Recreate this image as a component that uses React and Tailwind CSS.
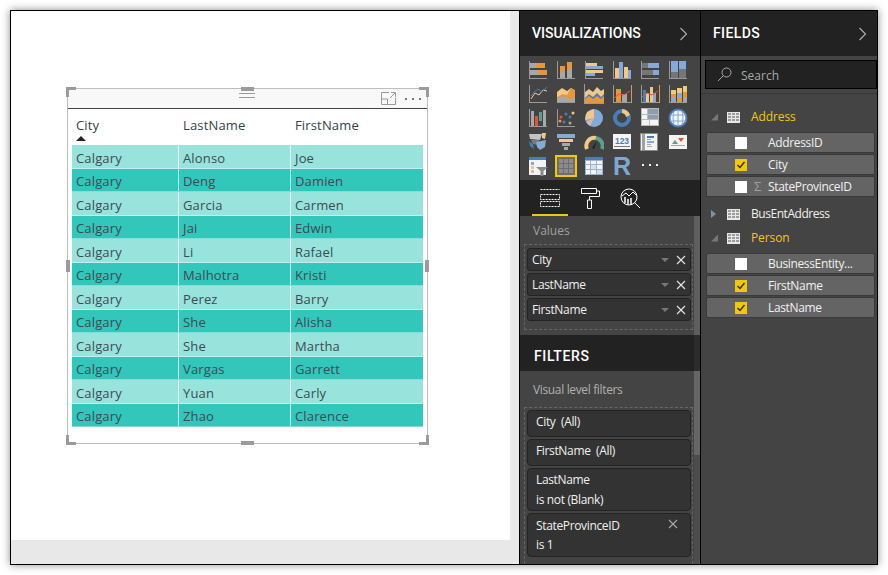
import React from "react";

const o = "#e8963c", l = "#efc88a", g = "#a8a8a8", b = "#85aad5", d = "#4a7db5", a = "#9a9a9a", G = "#767676", w = "#f4f4f4", r = "#d9573a", t = "#5f9e8f";

const bars = (...rows) => rows.map(([x, y, wd, h, c], i) => <rect key={i} x={x} y={y} width={wd} height={h} fill={c} />);
const axes = bars([1, 1, 1, 18, a], [1, 18, 18, 1, a]);

const chartIcons = [
    <>{axes}{bars([2, 3, 6, 5, g], [8, 3, 9, 5, o], [2, 10, 9, 5, g], [11, 10, 8, 5, o])}</>,
    <>{axes}{bars([4, 12, 5, 6, g], [4, 6, 5, 6, o], [11, 9, 5, 9, g], [11, 2, 5, 7, o])}</>,
    <>{axes}{bars([2, 3, 11, 3, l], [2, 6, 17, 3, b], [2, 10, 17, 3, l], [2, 13, 9, 3, b])}</>,
    <>{axes}{bars([3, 8, 4, 10, l], [7, 2, 4, 16, b], [12, 7, 4, 11, l], [16, 10, 3, 8, b])}</>,
    <>{axes}{bars([2, 3, 6, 5, G], [8, 3, 11, 5, b], [2, 10, 11, 5, G], [13, 10, 6, 5, b])}</>,
    <>{axes}{bars([3, 1, 7, 11, b], [3, 12, 7, 6, G], [11, 1, 7, 8, b], [11, 9, 7, 9, G])}</>,

    <>{axes}<polyline points="3,15 7,9 11,11 15,6 19,7" fill="none" stroke={l} strokeWidth="1" /><polyline points="3,12 6,8 10,5 14,8 19,3" fill="none" stroke={d} strokeWidth="1" /></>,
    <>{bars([1, 18, 18, 1, a])}<polygon points="1,18 1,8 6,4 11,7 15,4 19,7 19,18" fill={l} /><polygon points="1,18 1,13 7,10 11,11 15,4 19,6 19,18" fill={o} /><polygon points="1,18 1,14 8,12 13,15 19,14 19,18" fill={g} /></>,
    <>{bars([0, 0, 1, 20, a], [0, 19, 20, 1, a])}<polygon points="1,19 1,8 5,5 9,8 13,3 17,7 20,5 20,19" fill={l} /><polygon points="1,14 5,10 9,13 13,9 17,13 20,10 20,17 1,17" fill={d} /><polygon points="1,19 1,15 5,12 9,15 13,12 17,15 20,12 20,19" fill={o} /></>,
    <>{axes}{bars([4, 5, 5, 13, o], [10, 10, 5, 8, g], [19, 1, 1, 18, o])}<polyline points="2,14 7,10 12,11 18,7" fill="none" stroke={r} strokeWidth="1" /></>,
    <>{axes}{bars([3, 6, 3, 12, d], [6, 9, 3, 9, l], [10, 3, 3, 15, l], [13, 9, 3, 9, b], [19, 1, 1, 18, o])}<polyline points="2,13 7,9 12,11 18,7" fill="none" stroke={r} strokeWidth="1" /></>,
    <>{axes}{bars([3, 6, 5, 4, l], [3, 10, 5, 4, o], [3, 14, 5, 4, b], [9, 4, 5, 5, l], [9, 9, 5, 5, b], [9, 14, 5, 4, o], [15, 2, 4, 6, l], [15, 8, 4, 5, o], [15, 13, 4, 5, g])}</>,

    <>{axes}{bars([3, 3, 3, 15, g], [7, 8, 3, 10, r], [11, 4, 3, 9, t], [15, 2, 3, 16, g])}</>,
    <>{axes}<circle cx="4" cy="13" r="1.5" fill={o} /><circle cx="5" cy="9" r="1.5" fill={r} /><circle cx="8" cy="14" r="1.5" fill={d} /><circle cx="10" cy="6" r="1.5" fill={d} /><circle cx="14" cy="9" r="1.5" fill={d} /><circle cx="14" cy="15" r="1.5" fill={g} /><circle cx="17" cy="5" r="1.5" fill={l} /></>,
    <><circle cx="10" cy="10" r="9" fill={b} /><polygon points="10,10 1,12 3,4 10,1" fill={l} /><polygon points="10,10 2,14 6,18" fill="#e4b5a0" /></>,
    <><circle cx="10" cy="10" r="7" fill="none" stroke={d} strokeWidth="4" /><path d="M10 1 A9 9 0 0 1 18 7 L14 9 A5 5 0 0 0 10 5 Z" fill={l} /></>,
    <>{bars([1, 0, 18, 18, "#b9b9b9"], [2, 1, 5, 5, w], [8, 1, 10, 5, "#8e9eb0"], [2, 7, 5, 4, w], [8, 7, 10, 4, "#8e9eb0"], [2, 12, 7, 5, w], [10, 12, 8, 5, w])}</>,
    <><circle cx="10" cy="10" r="8.5" fill={w} stroke={d} strokeWidth="2" /><path d="M2 7H18M2 13H18M10 2V18M6 3Q4 10 6 17M14 3Q16 10 14 17" stroke={b} strokeWidth="1" fill="none" /></>,

    <><polygon points="1,2 14,2 12,8 2,7" fill="#c3c3c3" /><polygon points="3,8 11,8 10,13 5,12" fill="#7a7a7a" /><polygon points="8,10 18,8 17,15 12,18 9,15" fill={b} /><polygon points="14,1 18,1 17,7 14,6" fill={l} /><polygon points="1,9 5,12 6,17 2,14" fill={d} /></>,
    <>{bars([1, 2, 18, 4, b], [3, 7, 14, 3, l], [6, 11, 8, 3, g], [8, 15, 4, 3, g])}</>,
    <><path d="M3 17 A8 8 0 0 1 12 6" fill="none" stroke={l} strokeWidth="4" /><path d="M12 6 A8 8 0 0 1 18 17" fill="none" stroke={t} strokeWidth="4" /><polygon points="8,16 13,9 10,17" fill="#222" /></>,
    <>{bars([1, 2, 18, 15, w], [2, 14, 16, 1, G])}<text x="10" y="12" fontSize="8.5" fontWeight="700" textAnchor="middle" fill={d} fontFamily="'Liberation Sans', sans-serif">123</text></>,
    <>{bars([0, 1, 18, 18, "#8a8a8a"], [1, 2, 16, 16, w], [2, 2, 3, 16, "#a2a2a2"], [7, 4, 7, 2, d], [7, 7, 4, 1, g], [7, 9, 7, 2, b], [7, 12, 4, 1, g], [7, 14, 5, 1, g])}</>,
    <>{bars([1, 3, 18, 14, w], [3, 13, 14, 1, g])}<polygon points="4,12 7,8 10,12" fill={t} /><polygon points="10,6 16,6 13,10" fill={r} /></>,

    <>{bars([1, 1, 17, 18, w], [1, 1, 17, 3, d], [3, 6, 3, 3, b], [3, 10, 3, 3, l], [3, 14, 3, 3, "#e4b5a0"])}<polygon points="8,11 20,11 15.5,15 15.5,20 12.5,20 12.5,15" fill="#8a8a8a" /></>,
    null,
    <>{bars([1, 1, 18, 18, "#9fb3cc"], [1, 1, 18, 3, d], [2, 5, 4, 3, w], [7, 5, 5, 3, w], [13, 5, 5, 3, w], [2, 9, 4, 4, w], [7, 9, 5, 4, "#d5e0ee"], [13, 9, 5, 4, w], [2, 14, 4, 4, w], [7, 14, 5, 4, w], [13, 14, 5, 4, "#d5e0ee"])}</>,
    "R",
    <>{bars([2, 8, 2, 2, w], [9, 8, 2, 2, w], [16, 8, 2, 2, w])}</>,
];

const Icon = ({ children, size = 20 }) => (
    <svg width={size} height={size} viewBox="0 0 20 20" className="block">{children}</svg>
);

const SelectedTable = () => (
    <div className="w-[22px] h-[22px] border-2 border-[#f2c80f] bg-[#6e6e6e] grid grid-cols-3 gap-px p-[2px]">
        {Array.from({ length: 9 }).map((_, i) => <div key={i} className="bg-[#8c8c8c]" />)}
    </div>
);

const VizGrid = () => (
    <div className="grid grid-cols-[repeat(6,28px)] auto-rows-[24px] pl-[4px] pt-[2px] h-[124px] bg-[#444444]">
        {chartIcons.map((ic, i) => (
            <div key={i} className="flex items-center justify-center">
                {ic === null ? <SelectedTable /> : ic === "R" ? (
                    <span className="text-[25px] leading-none font-bold text-[#7fa8d0] font-['Liberation_Sans',sans-serif]">R</span>
                ) : <Icon>{ic}</Icon>}
            </div>
        ))}
    </div>
);

const Chevron = () => (
    <svg width="9" height="14" viewBox="0 0 9 14"><polyline points="1.5,1 7.5,7 1.5,13" fill="none" stroke="#b0b0b0" strokeWidth="1.1" /></svg>
);

const Cross = ({ color = "#e6e6e6" }) => (
    <svg width="10" height="10" viewBox="0 0 10 10"><path d="M1 1L9 9M9 1L1 9" stroke={color} strokeWidth="1.1" /></svg>
);

const PanelHead = ({ title, chevron, className = "" }) => (
    <div className={`flex items-center justify-between bg-[#222222] text-white font-medium text-[14px] font-['Roboto',sans-serif] ${className}`}>
        <span>{title}</span>
        {chevron && <Chevron />}
    </div>
);

const ValuePill = ({ label }) => (
    <div className="h-[23px] flex items-center bg-[#333333] border border-[#222222] rounded-[3px] pl-[4px] pr-[4px] text-[#f0f0f0] tracking-[-0.35px]">
        <span className="flex-1">{label}</span>
        <span className="w-0 h-0 mr-[7px] border-x-[4px] border-x-transparent border-t-[4px] border-t-[#777777]" />
        <Cross />
    </div>
);

const FilterPill = ({ lines, close, className }) => (
    <div className={`relative flex flex-col justify-center bg-[#333333] border border-[#222222] rounded-[4px] pl-[8px] text-[#f0f0f0] leading-[19.5px] tracking-[-0.35px] whitespace-pre ${className}`}>
        {lines.map((x) => <div key={x}>{x}</div>)}
        {close && <div className="absolute right-[12px] top-[5px]"><Cross color="#a8a8a8" /></div>}
    </div>
);

const TableGlyph = () => (
    <div className="w-[13px] h-[11px] bg-[#e8e8e8] grid grid-cols-3 grid-rows-3 gap-px p-px">
        {Array.from({ length: 9 }).map((_, i) => <div key={i} className="bg-[#9c9c9c]" />)}
    </div>
);

const Group = ({ name, open, active }) => (
    <div className="h-[24px] flex items-center pl-[10px]">
        {open ? (
            <span className="w-[7px] h-[7px] bg-[#777777] [clip-path:polygon(100%_0,100%_100%,0_100%)]" />
        ) : (
            <span className="w-0 h-0 border-y-[4px] border-y-transparent border-l-[5px] border-l-[#7c93ad] mr-[2px]" />
        )}
        <span className="ml-[9px]"><TableGlyph /></span>
        <span className={`ml-[11px] ${active ? "text-[#f2c80f] tracking-[-0.1px]" : "text-[#f0f0f0] tracking-[-0.45px]"}`}>{name}</span>
    </div>
);

const Field = ({ name, checked, sigma }) => (
    <div className="h-[21px] flex items-center bg-[#646464] border border-[#3a3a3a] rounded-[2px] text-[#f0f0f0] tracking-[-0.35px]">
        <span className={`ml-[28px] w-[12px] h-[12px] flex items-center justify-center ${checked ? "bg-[#f2c80f]" : "bg-white"}`}>
            {checked && <svg width="10" height="10" viewBox="0 0 10 10"><polyline points="1.5,5 4,7.5 8.5,2" fill="none" stroke="#333" strokeWidth="1.5" /></svg>}
        </span>
        <span className="w-[21px] text-center text-[#a0a0a0] text-[13px] leading-none">{sigma ? "Σ" : ""}</span>
        <span>{name}</span>
    </div>
);

const rows = [
    ["Calgary", "Alonso", "Joe"],
    ["Calgary", "Deng", "Damien"],
    ["Calgary", "Garcia", "Carmen"],
    ["Calgary", "Jai", "Edwin"],
    ["Calgary", "Li", "Rafael"],
    ["Calgary", "Malhotra", "Kristi"],
    ["Calgary", "Perez", "Barry"],
    ["Calgary", "She", "Alisha"],
    ["Calgary", "She", "Martha"],
    ["Calgary", "Vargas", "Garrett"],
    ["Calgary", "Yuan", "Carly"],
    ["Calgary", "Zhao", "Clarence"],
];

const Handle = ({ className }) => <div className={`absolute bg-[#9b9b9b] ${className}`} />;

const TableVisual = () => (
    <div className="relative w-[361px] h-[356px] border border-[#bdbdbd] bg-white font-['Open_Sans',sans-serif] text-[13px] tracking-[0.15px] text-[#3d4a55]">
        <div className="h-[20px] bg-[#f8f8f8] border-b border-[#444444] flex items-center justify-end pr-[6px] gap-[9px]">
            <svg width="15" height="13" viewBox="0 0 15 13"><path d="M8 .5H.5V12.5H14.5V6M.5 7H6.5V12.5M9 6L14 1M10 .5H14.5V5" fill="none" stroke="#9a9a9a" /></svg>
            <svg width="16" height="2" viewBox="0 0 16 2"><path d="M0 0h2v2H0zM7 0h2v2H7zM14 0h2v2h-2z" fill="#777777" /></svg>
        </div>
        <div className="h-[36px] flex pl-[4px] pt-[7px] text-[#333f48]">
            <div className="w-[107px] pl-[4px] relative">City<span className="absolute left-[4px] top-[20px] w-0 h-0 border-x-[5px] border-x-transparent border-b-[5px] border-b-[#222222]" /></div>
            <div className="w-[112px] pl-[4px]">LastName</div>
            <div className="pl-[4px]">FirstName</div>
        </div>
        <div className="ml-[4px] w-[351px]">
            {rows.map((row, i) => (
                <div key={i} className={`h-[23.5px] flex items-center border-b border-[#ffffff]/40 ${i % 2 ? "bg-[#33c6bb]" : "bg-[#98e4dc]"}`}>
                    <div className="w-[107px] h-full pl-[4px] pt-[4px] flex items-center border-r border-white/70">{row[0]}</div>
                    <div className="w-[112px] h-full pl-[4px] pt-[4px] flex items-center border-r border-white/70">{row[1]}</div>
                    <div className="pl-[4px] h-full pt-[4px] flex items-center">{row[2]}</div>
                </div>
            ))}
        </div>
        <div className="absolute left-[171px] top-[4px] w-[16px] flex flex-col gap-[3px]">
            <div className="h-px bg-[#9a9a9a]" />
            <div className="h-px bg-[#9a9a9a]" />
        </div>
        {/* resize handles */}
        <Handle className="-left-[2px] -top-[2px] w-[10px] h-[3px]" />
        <Handle className="-left-[2px] -top-[2px] w-[3px] h-[10px]" />
        <Handle className="-right-[2px] -top-[2px] w-[10px] h-[3px]" />
        <Handle className="-right-[2px] -top-[2px] w-[3px] h-[10px]" />
        <Handle className="-left-[2px] -bottom-[2px] w-[10px] h-[3px]" />
        <Handle className="-left-[2px] -bottom-[2px] w-[3px] h-[10px]" />
        <Handle className="-right-[2px] -bottom-[2px] w-[10px] h-[3px]" />
        <Handle className="-right-[2px] -bottom-[2px] w-[3px] h-[10px]" />
        <Handle className="left-[173px] -top-[2px] w-[13px] h-[4px]" />
        <Handle className="left-[173px] -bottom-[2px] w-[13px] h-[4px]" />
        <Handle className="-left-[2px] top-[171px] w-[4px] h-[12px]" />
        <Handle className="-right-[2px] top-[171px] w-[4px] h-[12px]" />
    </div>
);

const Tabs = () => (
    <div className="h-[36px] bg-[#222222] flex relative">
        <div className="ml-[12px] w-[36px] h-full border-b-2 border-[#f2c80f] flex justify-center pt-[8px]">
            <svg width="20" height="20" viewBox="0 0 20 20" fill="none" stroke="#ffffff" strokeDasharray="2 1">
                <path d="M.5 1.5H19.5M.5 6.5H19.5V11.5H.5ZM.5 13.5H19.5V18.5H.5Z" />
            </svg>
        </div>
        <div className="ml-[13px] pt-[8px]">
            <svg width="19" height="21" viewBox="0 0 19 21" fill="none" stroke="#ffffff">
                <path d="M.5.5H15.5V5.5H.5ZM15.5 3H18.5V8.5H8.5V12M6.5 12H10.5V20.5H6.5Z" />
            </svg>
        </div>
        <div className="ml-[20px] pt-[8px]">
            <svg width="21" height="21" viewBox="0 0 21 21" fill="none" stroke="#ffffff">
                <circle cx="9" cy="9" r="8" />
                <path d="M14.5 14.5L20 20M2 8L6 5L9 8L13 4L16 7" />
                <path d="M5 9V15M8 11V16.5M11 10V16.5" strokeWidth="1.5" />
            </svg>
        </div>
    </div>
);

export default function App() {
    return (
        <div className="w-[888px] h-[575px] bg-white pt-[10px] pl-[10px] overflow-hidden font-['Open_Sans',sans-serif] text-[12px]">
            <div className="w-[868px] h-[555px] border border-black flex shadow-[0_0_8px_rgba(0,0,0,0.45)] bg-white">
                <div className="w-[509px] border-r border-black flex flex-col">
                    <div className="flex-1 flex">
                        <div className="flex-1 pl-[56px] pt-[77px]">
                            <TableVisual />
                        </div>
                        <div className="w-[9px] bg-[#e8e8e8]" />
                    </div>
                    <div className="h-[24px] bg-[#e8e8e8]" />
                </div>

                <div className="w-[181px] border-r border-black flex flex-col bg-[#444444]">
                    <PanelHead title="VISUALIZATIONS" chevron className="h-[45px] pl-[12px] pr-[12px]" />
                    <VizGrid />
                    <Tabs />
                    <div className="h-[119px] flex">
                        <div className="flex-1 pt-[7px] pl-[4px] pr-[1px]">
                            <div className="text-[#a0a0a0] pl-[9px] mb-[5px] leading-[16px]">Values</div>
                            <div className="h-[86px] border border-dashed border-[#666666] pl-[2px] pr-[1px] pt-[3px] flex flex-col gap-[2px]">
                                <ValuePill label="City" />
                                <ValuePill label="LastName" />
                                <ValuePill label="FirstName" />
                            </div>
                        </div>
                        <div className="w-[6px] bg-[#5e5e5e]" />
                    </div>
                    <div className="h-[36px] flex bg-[#222222]">
                        <PanelHead title="FILTERS" className="flex-1 pl-[14px] pt-[6px] tracking-[0.6px]" />
                        <div className="w-[6px] bg-[#2c2c2c]" />
                    </div>
                    <div className="flex-1 flex min-h-0">
                        <div className="flex-1 pl-[4px] pr-[1px] pt-[11px]">
                            <div className="text-[#b0b0b0] pl-[9px] leading-[16px] mb-[9px] tracking-[-0.35px]">Visual level filters</div>
                            <div className="h-[157px] border border-dashed border-b-0 border-[#666666] pl-[2px] pr-[1px] pt-[2px] flex flex-col gap-[2px]">
                                <FilterPill lines={["City  (All)"]} className="h-[27px] pb-[3px]" />
                                <FilterPill lines={["FirstName  (All)"]} className="h-[27px] pb-[3px]" />
                                <FilterPill lines={["LastName", "is not (Blank)"]} className="h-[43px]" />
                                <FilterPill lines={["StateProvinceID", "is 1"]} close className="h-[44px]" />
                            </div>
                        </div>
                        <div className="w-[6px] bg-[#4c4c4c]">
                            <div className="h-[84px] bg-[#666666]" />
                        </div>
                    </div>
                </div>

                <div className="flex-1 flex flex-col bg-[#444444]">
                    <PanelHead title="FIELDS" chevron className="h-[45px] pl-[12px] pr-[10px] tracking-[0.4px]" />
                    <div className="h-[38px] pt-[4px] pl-[4px] border-b border-[#383838]">
                        <div className="h-[29px] bg-[#222222] border border-black flex items-center pl-[11px] text-[#a8a8a8]">
                            <svg width="15" height="15" viewBox="0 0 15 15" fill="none" stroke="#a8a8a8"><circle cx="9.5" cy="5.5" r="4.5" /><path d="M6.2 8.8L1 14" /></svg>
                            <span className="ml-[9px] relative top-px">Search</span>
                        </div>
                    </div>
                    <div className="pt-[11px]">
                        <Group name="Address" open active />
                        <div className="pl-[5px] pr-[2px] pt-[3px] flex flex-col gap-px">
                            <Field name="AddressID" />
                            <Field name="City" checked />
                            <Field name="StateProvinceID" sigma />
                        </div>
                        <div className="mt-[5px]"><Group name="BusEntAddress" /></div>
                        <Group name="Person" open active />
                        <div className="pl-[5px] pr-[2px] pt-[3px] flex flex-col gap-px">
                            <Field name="BusinessEntity..." />
                            <Field name="FirstName" checked />
                            <Field name="LastName" checked />
                        </div>
                    </div>
                </div>
            </div>
        </div>
    );
}
